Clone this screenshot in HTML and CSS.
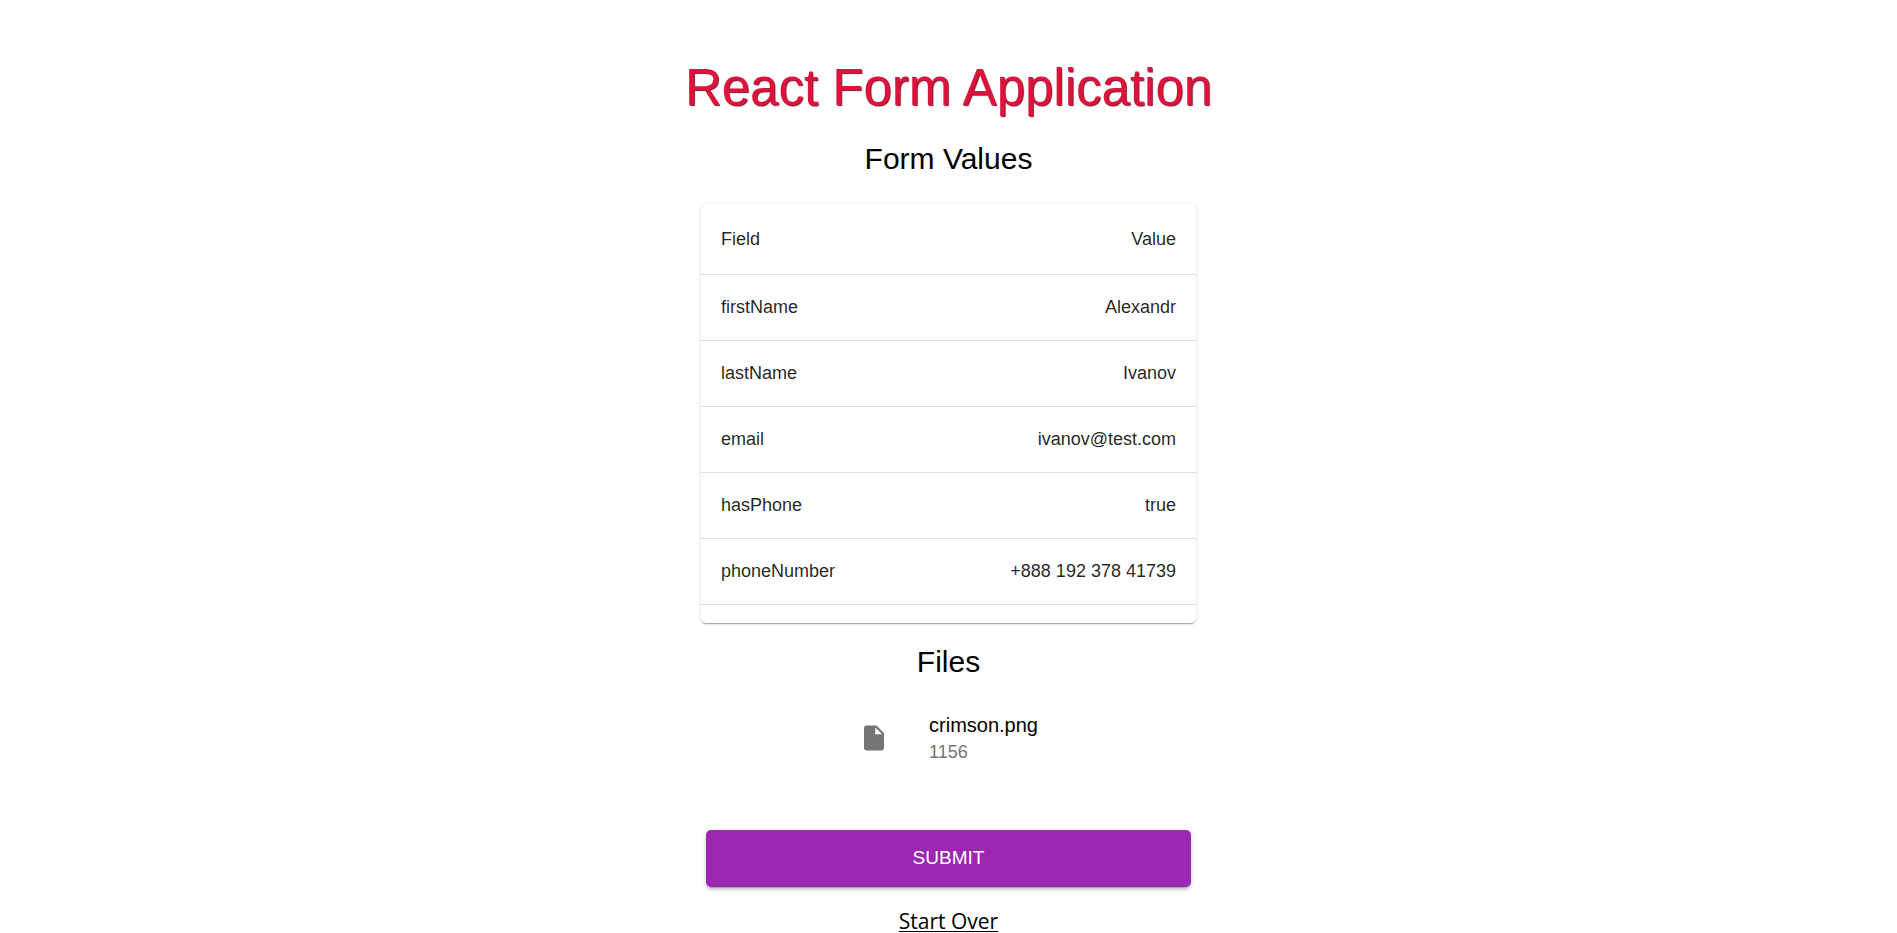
FILE: index.html
```html
<!DOCTYPE html>
<html lang="en">
<head>
<meta charset="utf-8">
<meta name="viewport" content="width=device-width, initial-scale=1">
<title>React Form Application</title>
<link rel="stylesheet" href="styles.css">
</head>
<body>
<main class="page">
  <h1 class="title">React Form Application</h1>
  <h2 class="heading">Form Values</h2>
  <div class="card">
    <table class="values">
      <thead>
        <tr><th scope="col">Field</th><th scope="col">Value</th></tr>
      </thead>
      <tbody>
        <tr><td>firstName</td><td>Alexandr</td></tr>
        <tr><td>lastName</td><td>Ivanov</td></tr>
        <tr><td>email</td><td>ivanov@test.com</td></tr>
        <tr><td>hasPhone</td><td>true</td></tr>
        <tr><td>phoneNumber</td><td>+888 192 378 41739</td></tr>
      </tbody>
    </table>
  </div>
  <h2 class="heading">Files</h2>
  <ul class="files">
    <li class="file">
      <svg class="file-icon" viewBox="0 0 24 24" aria-hidden="true"><path d="M6 2c-1.100 0-1.990.9-1.990 2L4 20c0 1.100.89 2 1.990 2H18c1.100 0 2-.9 2-2V8l-6-6H6zm7 7V3.500L18.500 9H13z"/></svg>
      <div>
        <div class="file-name">crimson.png</div>
        <div class="file-size">1156</div>
      </div>
    </li>
  </ul>
  <button class="submit" type="button">SUBMIT</button>
  <a class="restart" href="#">Start Over</a>
</main>
</body>
</html>
```

FILE: styles.css
```css
* {
  box-sizing: border-box;
}

body {
  margin: 0;
  background: #fff;
  color: #000;
  font-family: "Liberation Sans", Arial, sans-serif;
}

.page {
  display: flex;
  flex-direction: column;
  align-items: center;
  padding-top: 58px;
}

.title {
  margin: 0 0 2px;
  color: crimson;
  font-size: 51px;
  font-weight: 400;
  line-height: 60px;
  text-align: center;
  text-shadow: 1px 1px 1px #8a1030;
}

.heading {
  margin: 19px 0 0;
  font-size: 30px;
  font-weight: 400;
  line-height: 40px;
}

.card {
  width: 100%;
  max-width: 495px;
  margin-top: 25px;
  padding-bottom: 18px;
  border-radius: 5px;
  box-shadow: 0 3px 1px -2px rgba(0, 0, 0, 0.2), 0 1px 1px rgba(0, 0, 0, 0.14), 0 1px 4px rgba(0, 0, 0, 0.12);
}

.values {
  width: 100%;
  border-collapse: separate;
  border-spacing: 0;
  color: rgba(0, 0, 0, 0.87);
  font-size: 18px;
  line-height: 25px;
}

.values th,
.values td {
  padding: 20px;
  border-bottom: 1px solid #e0e0e0;
  font-weight: 400;
  text-align: left;
}

.values th {
  line-height: 30px;
}

.values th:last-child,
.values td:last-child {
  text-align: right;
}

.files {
  margin: 13px 0 0;
  padding: 10px 0;
  list-style: none;
}

.file {
  display: flex;
  align-items: center;
  gap: 40px;
  padding: 5px 0;
}

.file-icon {
  width: 30px;
  height: 30px;
  fill: #757575;
}

.file-name {
  font-size: 20px;
  line-height: 30px;
}

.file-size {
  color: #757575;
  font-size: 18px;
  line-height: 25px;
}

.submit {
  width: 100%;
  max-width: 485px;
  margin-top: 50px;
  padding: 15px 20px 17px;
  border: 0;
  border-radius: 5px;
  background: #9c27b0;
  box-shadow: 0 4px 1px -3px rgba(0, 0, 0, 0.2), 0 3px 3px rgba(0, 0, 0, 0.14), 0 1px 6px rgba(0, 0, 0, 0.12);
  color: #fff;
  font-family: inherit;
  font-size: 19px;
  font-weight: 400;
  line-height: 25px;
}

.restart {
  margin-top: 22px;
  color: #000;
  font-family: "Open Sans", "Noto Sans", sans-serif;
  font-size: 21px;
  line-height: 24px;
  text-decoration-thickness: 1px;
  text-underline-offset: 2px;
}
```
